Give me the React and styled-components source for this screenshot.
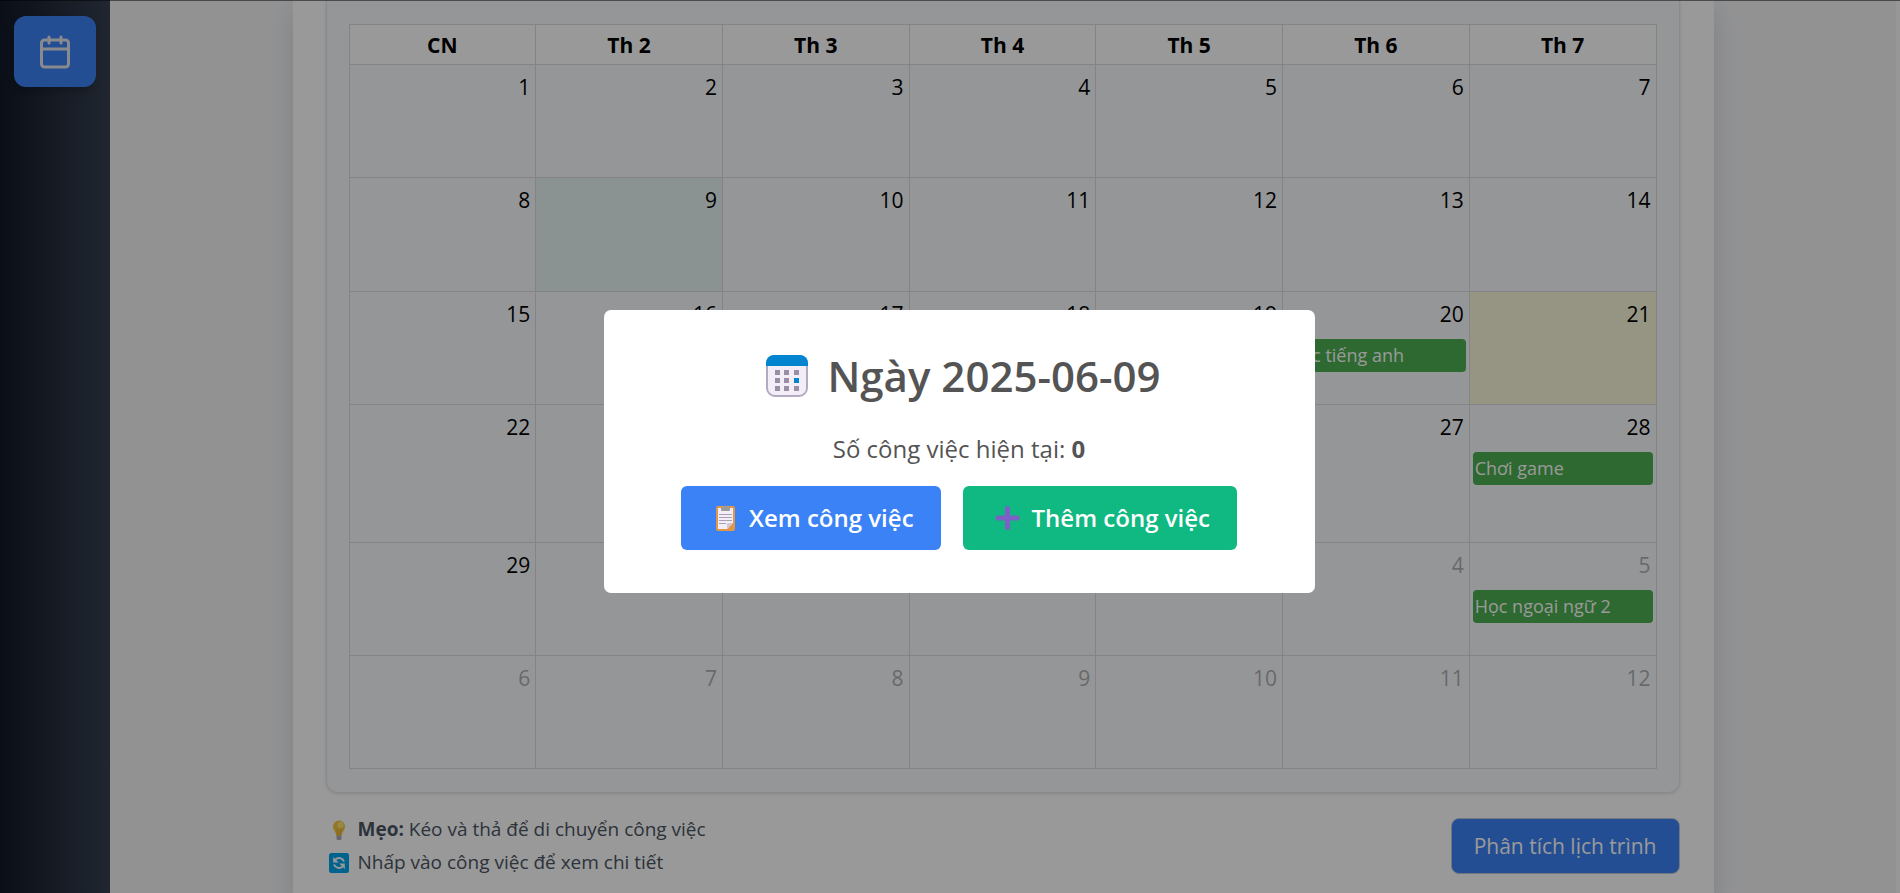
import React from 'react'
import styled, { createGlobalStyle } from 'styled-components'
import { FiCalendar } from 'react-icons/fi'

const GlobalStyle = createGlobalStyle`
* {
  box-sizing: border-box;
}
body {
  margin: 0;
  overflow: hidden;
  background-color: #f3f4f6;
  font-family: "Open Sans", "Noto Sans", "Liberation Sans", sans-serif;
}
`;

const Layout = styled.div`
display: flex;
height: 100vh;
overflow: hidden;
`;

const Sidebar = styled.nav`
display: flex;
flex-direction: column;
width: 110px;
flex-shrink: 0;
padding: 16px 14px;
background: linear-gradient(to right, #111827, #374151);
`;

const SidebarButton = styled.button`
display: flex;
align-items: center;
justify-content: center;
height: 71px;
border: none;
border-radius: 12px;
background-color: #3b82f6;
color: #e5e7eb;
font-size: 36px;
cursor: pointer;
box-shadow: 0 4px 8px rgba(0, 0, 0, 0.2);
`;

const Content = styled.main`
flex: 1;
min-width: 0;
border-right: 4px solid #fcfcfc;
`;

const Card = styled.section`
max-width: 1421px;
min-height: 100%;
margin: 0 auto;
padding: 0 34px 20px 33px;
background-color: #ffffff;
box-shadow: 0 10px 25px rgba(0, 0, 0, 0.12);
`;

const Panel = styled.div`
padding: 24px 22px 23px;
border: 1px solid #e5e7eb;
border-top: none;
border-radius: 0 0 12px 12px;
background-color: #f8fafc;
box-shadow: 0 1px 3px rgba(0, 0, 0, 0.12);
`;

const Table = styled.table`
width: 100%;
table-layout: fixed;
border-collapse: collapse;
`;

const HeadCell = styled.th`
height: 40px;
padding: 0;
border: 1px solid #dddddd;
background-color: #ffffff;
color: #000000;
font-size: 21px;
font-weight: 700;
line-height: 30px;
`;

const Week = styled.tr`
height: ${({ $height }) => $height}px;
`;

const DayCell = styled.td`
padding: 7px 3px 0;
border: 1px solid #dddddd;
vertical-align: top;
background-color: ${({ $mark }) => ($mark === 'selected' ? '#e6f4f4' : $mark === 'today' ? '#fbf8dc' : 'transparent')};
`;

const DayNumber = styled.div`
padding-right: 2px;
color: #000000;
font-size: 21px;
line-height: 30px;
text-align: right;
opacity: ${({ $other }) => ($other ? 0.3 : 1)};
`;

const Event = styled.a`
display: block;
height: 33px;
margin-top: 10px;
padding: 0 2px;
border-radius: 4px;
background-color: #4caf50;
color: #ffffff;
font-size: 18px;
line-height: 33px;
text-decoration: none;
white-space: nowrap;
overflow: hidden;
`;

const Footer = styled.footer`
display: flex;
justify-content: space-between;
align-items: flex-start;
padding-top: 20px;
`;

const Tips = styled.div`
color: #4b5563;
font-size: 19px;
`;

const Tip = styled.p`
display: flex;
align-items: center;
gap: 9px;
margin: 0;
padding-left: 3px;
line-height: 33px;
`;

const AnalyzeButton = styled.button`
height: 56px;
margin-top: 5px;
padding: 0 22px;
border: 1px solid #bfc8d8;
border-radius: 8px;
background-color: #3b82f6;
color: #ffffff;
font-family: inherit;
font-size: 21px;
cursor: pointer;
`;

const Overlay = styled.div`
position: fixed;
inset: 0;
display: flex;
align-items: center;
justify-content: center;
padding: 8px 0 0 18px;
border-top: 1px solid rgba(0, 0, 0, 0.5);
background-color: rgba(0, 0, 0, 0.4);
`;

const Modal = styled.div`
display: flex;
flex-direction: column;
align-items: center;
width: 711px;
max-width: 100%;
padding: 36px 20px 43px;
border-radius: 7px;
background-color: #ffffff;
color: #545454;
`;

const ModalTitle = styled.h2`
display: flex;
align-items: center;
gap: 18px;
margin: 0;
padding-left: 8px;
font-size: 42px;
font-weight: 600;
line-height: 60px;
`;

const ModalText = styled.p`
margin: 25px 0 19px;
font-size: 24px;
line-height: 36px;
`;

const Actions = styled.div`
display: flex;
gap: 22px;
`;

const ActionButton = styled.button`
display: flex;
align-items: center;
gap: 12px;
height: 64px;
padding: 0 27px 0 32px;
border: none;
border-radius: 6px;
background-color: ${({ $color }) => $color};
color: #ffffff;
font-family: inherit;
font-size: 24px;
font-weight: 600;
cursor: pointer;
`;

const CalendarIcon = () => (
  <svg width="44" height="44" viewBox="0 0 44 44" aria-hidden="true">
    <rect x="2" y="2" width="40" height="40" rx="8" fill="#f3edf8" stroke="#b4a9c2" strokeWidth="2" />
    <path d="M1 12V9a8 8 0 0 1 8-8h26a8 8 0 0 1 8 8v3z" fill="#0384ce" />
    <g fill="#998ea4">
      <rect x="10" y="16" width="5" height="5" />
      <rect x="19" y="16" width="5" height="5" />
      <rect x="29" y="16" width="5" height="5" />
      <rect x="10" y="24" width="5" height="5" />
      <rect x="19" y="24" width="5" height="5" />
      <rect x="10" y="32" width="5" height="5" />
      <rect x="19" y="32" width="5" height="5" />
      <rect x="29" y="32" width="5" height="5" />
    </g>
    <rect x="29" y="24" width="5" height="5" fill="#0384ce" />
  </svg>
)

const ClipboardIcon = () => (
  <svg width="24" height="26" viewBox="0 0 24 26" aria-hidden="true">
    <rect x="3" y="1" width="19" height="25" rx="2" fill="#e19747" />
    <path d="M5 3h15v15l-6 6H5z" fill="#f3edf8" />
    <path d="M14 24v-5a1 1 0 0 1 1-1h5z" fill="#cfc5d8" />
    <path d="M8 2h3a1.500 1.500 0 0 1 3 0h3v3a1 1 0 0 1-1 1H9a1 1 0 0 1-1-1z" fill="#9b9b9b" />
    <path d="M6 9.500h13M6 12.500h13M6 15.500h13M6 18.500h7" stroke="#a9a0b3" strokeWidth="1" />
  </svg>
)

const PlusIcon = () => (
  <svg width="25" height="26" viewBox="0 0 25 26" aria-hidden="true">
    <path d="M12.500 3.500v19M3 13h19" stroke="#7d5fc5" strokeWidth="5" strokeLinecap="round" />
  </svg>
)

const BulbIcon = () => (
  <svg width="20" height="20" viewBox="0 0 20 20" aria-hidden="true">
    <path d="M7.500 15h5v3.500a1.500 1.500 0 0 1-1.500 1.500H9a1.500 1.500 0 0 1-1.500-1.500z" fill="#b0aab8" />
    <path d="M10 .5a6 6 0 0 0-6 6c0 3.500 2.800 4.500 3.300 9h5.400c.5-4.500 3.300-5.500 3.300-9a6 6 0 0 0-6-6z" fill="#f5c63c" />
    <circle cx="11.500" cy="5" r="3" fill="#fbe67a" />
    <path d="M8 9l1.200 6M12 9l-1.200 6" stroke="#e19747" strokeWidth=".8" />
  </svg>
)

const RefreshIcon = () => (
  <svg width="20" height="20" viewBox="0 0 20 20" aria-hidden="true">
    <rect width="20" height="20" rx="2.500" fill="#00a6ed" />
    <path d="M6.500 6.500C9 4 13.500 4.700 15 8.500M13.500 13.500C11 16 6.500 15.300 5 11.500" fill="none" stroke="#fff" strokeWidth="2" />
    <path d="M4.200 4v5.500h5.500zM15.800 16v-5.500h-5.500z" fill="#fff" />
  </svg>
)

const dayNames = ['CN', 'Th 2', 'Th 3', 'Th 4', 'Th 5', 'Th 6', 'Th 7']

const events = {
  19: 'Học tiếng anh',
  27: 'Chơi game',
  34: 'Học ngoại ngữ 2',
}

const marks = { 8: 'selected', 20: 'today' }

const weekHeights = [113, 114, 113, 138, 113, 113]

const App = () => {
  return (
    <>
      <GlobalStyle />
      <Layout>
        <Sidebar>
          <SidebarButton aria-label="Lịch">
            <FiCalendar />
          </SidebarButton>
        </Sidebar>
        <Content>
          <Card>
            <Panel>
              <Table>
                <thead>
                  <tr>
                    {dayNames.map((name) => (
                      <HeadCell key={name} scope="col">{name}</HeadCell>
                    ))}
                  </tr>
                </thead>
                <tbody>
                  {weekHeights.map((height, week) => (
                    <Week key={week} $height={height}>
                      {dayNames.map((name, i) => {
                        const index = week * 7 + i
                        const other = index >= 30
                        return (
                          <DayCell key={name} $mark={marks[index]}>
                            <DayNumber $other={other}>{other ? index - 29 : index + 1}</DayNumber>
                            {events[index] && <Event href="#">{events[index]}</Event>}
                          </DayCell>
                        )
                      })}
                    </Week>
                  ))}
                </tbody>
              </Table>
            </Panel>
            <Footer>
              <Tips>
                <Tip>
                  <BulbIcon />
                  <span><strong>Mẹo:</strong> Kéo và thả để di chuyển công việc</span>
                </Tip>
                <Tip>
                  <RefreshIcon />
                  <span>Nhấp vào công việc để xem chi tiết</span>
                </Tip>
              </Tips>
              <AnalyzeButton>Phân tích lịch trình</AnalyzeButton>
            </Footer>
          </Card>
        </Content>
      </Layout>
      <Overlay>
        <Modal role="dialog" aria-modal="true" aria-labelledby="day-title">
          <ModalTitle id="day-title">
            <CalendarIcon />
            Ngày 2025-06-09
          </ModalTitle>
          <ModalText>Số công việc hiện tại: <strong>0</strong></ModalText>
          <Actions>
            <ActionButton $color="#3b82f6">
              <ClipboardIcon />
              Xem công việc
            </ActionButton>
            <ActionButton $color="#10b981">
              <PlusIcon />
              Thêm công việc
            </ActionButton>
          </Actions>
        </Modal>
      </Overlay>
    </>
  )
}

export default App
